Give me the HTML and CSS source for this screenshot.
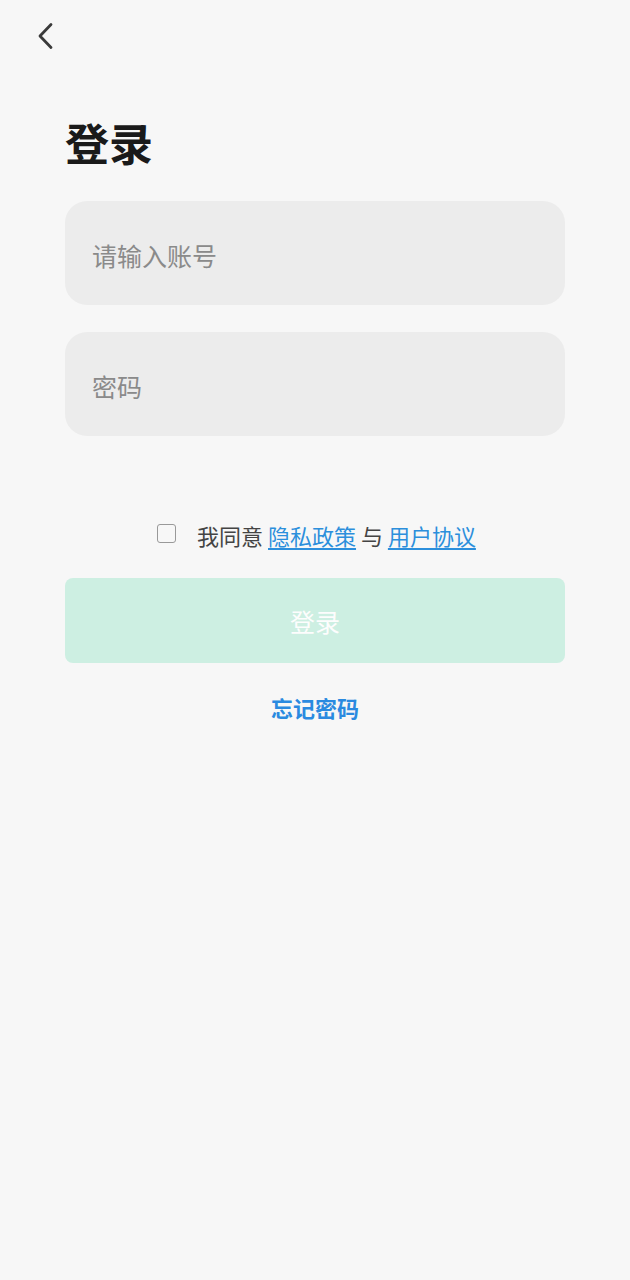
FILE: index.html
```html
<!DOCTYPE html>
<html lang="zh">
<head>
    <meta charset="UTF-8">
    <meta name="viewport" content="width=device-width, initial-scale=1.0">
    <title>登录</title>
    <link rel="stylesheet" href="styles.css">
</head>
<body>
    <div class="topbar">
        <svg class="back" width="20" height="28" viewBox="0 0 20 28">
            <path d="M15 2.5 L4 14 L15 25.5" fill="none" stroke="#3a3a3a" stroke-width="2.8" stroke-linecap="round" stroke-linejoin="round"/>
        </svg>
    </div>

    <div class="page">
        <h1 class="title">登录</h1>

        <div class="field"><input type="text" placeholder="请输入账号"></div>
        <div class="field"><input type="password" placeholder="密码"></div>

        <div class="agree">
            <span class="check"></span>
            <span>我同意 <a href="#">隐私政策</a> 与 <a href="#">用户协议</a></span>
        </div>

        <button class="login" disabled>登录</button>

        <a class="forgot" href="#">忘记密码</a>
    </div>
</body>
</html>
```

FILE: styles.css
```css
body {
    margin: 0;
    background-color: #f7f7f7;
    font-family: "Noto Sans CJK SC", "Noto Sans", sans-serif;
    color: #333;
}
.topbar {
    height: 72px;
    padding-left: 36px;
    display: flex;
    align-items: center;
}
.back {
    margin-top: -1px;
}
.page {
    padding: 0 65px;
    display: flex;
    flex-direction: column;
}
.title {
    margin: 40px 0 0 0;
    font-size: 44px;
    font-weight: bold;
    line-height: 60px;
    color: #1a1a1a;
}
.field {
    margin-top: 27px;
    height: 104px;
    background-color: #ececec;
    border-radius: 22px;
    display: flex;
    align-items: center;
}
.field:first-of-type {
    margin-top: 29px;
}
.field input {
    width: 100%;
    border: none;
    background: transparent;
    outline: none;
    padding: 3px 27px 0;
    font-family: inherit;
    font-size: 25px;
    color: #333;
}
.field input::placeholder {
    color: #8a8a8a;
}
.agree {
    margin-top: 82px;
    display: flex;
    justify-content: center;
    align-items: center;
    gap: 21px;
    padding-left: 3px;
    font-size: 22px;
    color: #444;
    line-height: 34px;
}
.check {
    width: 17px;
    height: 17px;
    border: 1.5px solid #999;
    border-radius: 3px;
    margin-top: -3px;
}
.agree a {
    color: #2c8fdc;
    text-decoration: underline;
    text-underline-offset: 3px;
}
.login {
    margin-top: 26px;
    height: 85px;
    border: none;
    border-radius: 8px;
    background-color: #cdefe2;
    color: #fdfdfd;
    font-family: inherit;
    font-size: 25px;
}
.forgot {
    margin-top: 28px;
    align-self: center;
    color: #2a8ae0;
    font-weight: bold;
    font-size: 22px;
    text-decoration: none;
}
```
